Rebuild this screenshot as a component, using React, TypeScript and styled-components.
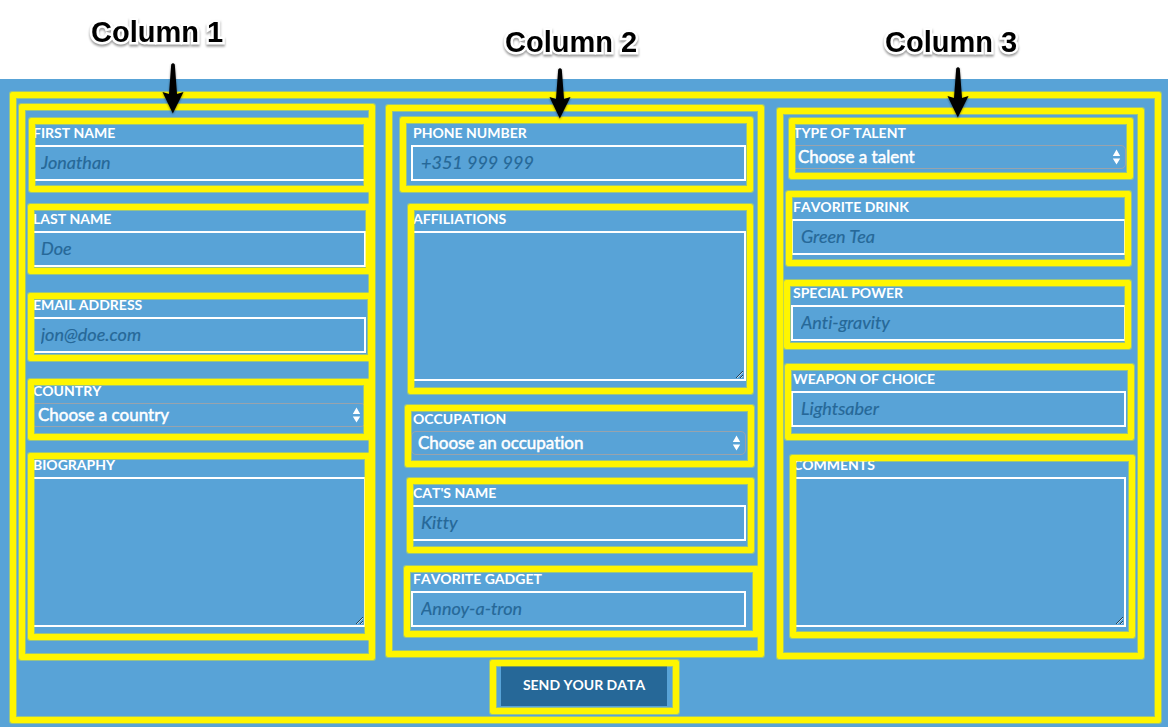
import React, { useId } from "react";
import styled, { createGlobalStyle, css } from "styled-components";

const colors = {
  sky: "#58a3d7",
  navy: "#266898",
  marker: "#fff500",
  markerEdge: "rgba(255, 245, 0, 0.4)",
  selectBorder: "#98a3ad",
};

const GlobalStyle = createGlobalStyle`
  *, *::before, *::after { box-sizing: border-box; }
  body {
    margin: 0;
    background: #fff;
    font-family: Lato, "Liberation Sans", sans-serif;
  }
`;

/* How far a marker reaches outside its box: top, right, bottom, left. */
type Reach = [number, number, number, number];

/* Hand-placed highlighter frame laid over the box it surrounds. */
const marked = css<{ $reach: Reach }>`
  position: relative;
  &::after {
    content: "";
    position: absolute;
    inset: ${({ $reach }) => $reach.map((n) => `${1 - n}px`).join(" ")};
    border: 6px solid ${colors.marker};
    border-radius: 2px;
    box-shadow: 0 0 0 1px ${colors.markerEdge}, inset 0 0 0 1px ${colors.markerEdge};
    pointer-events: none;
  }
`;

const Page = styled.div`
  display: flex;
  flex-direction: column;
  min-height: 100vh;
`;

const Header = styled.header`
  display: grid;
  grid-template-columns: repeat(3, minmax(0, 1fr));
  min-height: 79px;
  padding: 0 14px;
`;

const Callout = styled.div<{ $indent: number; $drop: number }>`
  position: relative;
  padding: ${({ $drop }) => $drop}px 0 0 ${({ $indent }) => $indent}px;
`;

const CalloutTitle = styled.h2`
  margin: 0;
  font: bold 29px/32px "Liberation Sans", Arial, sans-serif;
  color: #000;
  white-space: nowrap;
  -webkit-text-stroke: 5px #fff;
  paint-order: stroke fill;
  filter: drop-shadow(0 2px 1px rgba(0, 0, 0, 0.4));
`;

const Arrow = styled.svg<{ $x: number; $y: number }>`
  position: absolute;
  z-index: 2;
  left: ${({ $x }) => $x}px;
  top: ${({ $y }) => $y}px;
  filter: drop-shadow(0 1px 1px rgba(0, 0, 0, 0.45));
`;

const Main = styled.main`
  flex: 1;
  padding: 44px 14px 21px;
  background: ${colors.sky};
`;

const Form = styled.form`
  ${marked}
`;

const Columns = styled.div`
  display: grid;
  grid-template-columns: repeat(3, minmax(0, 1fr));
  column-gap: 45px;
  align-items: start;
  padding: 0 28px 0 17px;
`;

const Column = styled.section`
  ${marked}
  display: flex;
  flex-direction: column;
  gap: 28px;
`;

const FieldBox = styled.div`
  ${marked}
  display: flex;
  flex-direction: column;
  gap: 2px;
`;

const capsText = css`
  font-size: 14px;
  line-height: 20px;
  font-weight: 700;
  font-kerning: none;
  text-transform: uppercase;
  color: #fff;
`;

const Label = styled.label`
  ${capsText}
  padding-left: 2px;
`;

const control = css`
  display: block;
  width: 100%;
  margin: 0;
  background: transparent;
  color: #fff;
  font-family: inherit;
  font-size: 17px;
  line-height: 22px;
  font-variant-ligatures: none;
`;

const TextInput = styled.input`
  ${control}
  height: 36px;
  padding: 0 8px 2px;
  border: 2px solid #fff;
  font-size: 18px;
  &::placeholder {
    color: ${colors.navy};
    font-style: italic;
    opacity: 1;
    -webkit-text-stroke: 0.2px ${colors.navy};
  }
`;

const TextArea = styled.textarea`
  ${control}
  height: 150px;
  padding: 6px 8px;
  border: 2px solid #fff;
`;

const SelectBox = styled.div`
  position: relative;
`;

const Select = styled.select`
  ${control}
  appearance: none;
  height: 24px;
  padding: 0 24px 0 6px;
  border: 1px solid ${colors.selectBorder};
  border-radius: 5px;
  -webkit-text-stroke: 0.5px #fff;
  option { color: #222; }
`;

const Stepper = styled.svg`
  position: absolute;
  top: 4px;
  right: 5px;
  pointer-events: none;
`;

const Actions = styled.div`
  display: flex;
  justify-content: center;
  margin-top: 37px;
`;

const SubmitBox = styled.div`
  ${marked}
`;

const SubmitButton = styled.button`
  ${capsText}
  display: block;
  height: 42px;
  padding: 0 22px;
  border: 0;
  background: ${colors.navy};
  font-family: inherit;
`;

type FieldSpec = {
  kind: "text" | "email" | "tel" | "area" | "select";
  label: string;
  hint?: string;
  reach: Reach;
};

const columns: { reach: Reach; fields: FieldSpec[] }[] = [
  {
    reach: [20, 10, 34, 13],
    fields: [
      { kind: "text", label: "First name", hint: "Jonathan", reach: [6, 5, 12, 3] },
      { kind: "text", label: "Last name", hint: "Doe", reach: [6, 7, 8, 4] },
      { kind: "email", label: "Email address", hint: "jon@doe.com", reach: [3, 9, 9, 4] },
      { kind: "select", label: "Country", hint: "Choose a country", reach: [3, 5, 14, 4] },
      { kind: "area", label: "Biography", reach: [3, 6, 14, 4] },
    ],
  },
  {
    reach: [19, 19, 31, 26],
    fields: [
      { kind: "tel", label: "Phone number", hint: "+351 999 999", reach: [7, 8, 12, 12] },
      { kind: "area", label: "Affiliations", reach: [6, 8, 14, 4] },
      { kind: "select", label: "Occupation", hint: "Choose an occupation", reach: [5, 9, 13, 7] },
      { kind: "text", label: "Cat's name", hint: "Kitty", reach: [6, 9, 13, 5] },
      { kind: "text", label: "Favorite gadget", hint: "Annoy-a-tron", reach: [4, 14, 11, 8] },
    ],
  },
  {
    reach: [16, 19, 33, 15],
    fields: [
      { kind: "select", label: "Type of talent", hint: "Choose a talent", reach: [6, 8, 11, 3] },
      { kind: "text", label: "Favorite drink", hint: "Green Tea", reach: [7, 6, 12, 6] },
      { kind: "text", label: "Special power", hint: "Anti-gravity", reach: [4, 6, 9, 8] },
      { kind: "text", label: "Weapon of choice", hint: "Lightsaber", reach: [6, 9, 14, 7] },
      { kind: "area", label: "Comments", reach: [1, 10, 12, 2] },
    ],
  },
];

const callouts = [
  { title: "Column 1", indent: 77, drop: 16, arrowX: 147, arrowY: 62 },
  { title: "Column 2", indent: 111, drop: 26, arrowX: 154, arrowY: 67 },
  { title: "Column 3", indent: 111, drop: 26, arrowX: 172, arrowY: 66 },
];

function Field({ kind, label, hint, reach }: FieldSpec) {
  const id = useId();
  return (
    <FieldBox $reach={reach}>
      <Label htmlFor={id}>{label}</Label>
      {kind === "area" && <TextArea id={id} />}
      {kind === "select" && (
        <SelectBox>
          <Select id={id} defaultValue="">
            <option value="">{hint}</option>
          </Select>
          <Stepper width="9" height="16" viewBox="0 0 9 16" fill="#fff" aria-hidden="true">
            <path d="M4.5 0.5 8.2 7H0.8zM4.5 15.5 0.8 9.5H8.2z" />
          </Stepper>
        </SelectBox>
      )}
      {kind !== "area" && kind !== "select" && (
        <TextInput id={id} type={kind} placeholder={hint} />
      )}
    </FieldBox>
  );
}

export default function App() {
  return (
    <Page>
      <GlobalStyle />
      <Header>
        {callouts.map((c) => (
          <Callout key={c.title} $indent={c.indent} $drop={c.drop}>
            <CalloutTitle>{c.title}</CalloutTitle>
            <Arrow $x={c.arrowX} $y={c.arrowY} width="24" height="54" viewBox="0 0 24 54" aria-hidden="true">
              <path d="M10.2 2.5Q12 0 13.8 2.5L16 32 22.5 30 11.8 51.5 1.5 30 8 32Z" />
            </Arrow>
          </Callout>
        ))}
      </Header>
      <Main>
        <Form $reach={[32, 8, 18, 5]} onSubmit={(e) => e.preventDefault()}>
          <Columns>
            {columns.map((column, i) => (
              <Column key={i} $reach={column.reach}>
                {column.fields.map((field) => (
                  <Field key={field.label} {...field} />
                ))}
              </Column>
            ))}
          </Columns>
          <Actions>
            <SubmitBox $reach={[5, 13, 9, 12]}>
              <SubmitButton type="submit">Send your data</SubmitButton>
            </SubmitBox>
          </Actions>
        </Form>
      </Main>
    </Page>
  );
}
